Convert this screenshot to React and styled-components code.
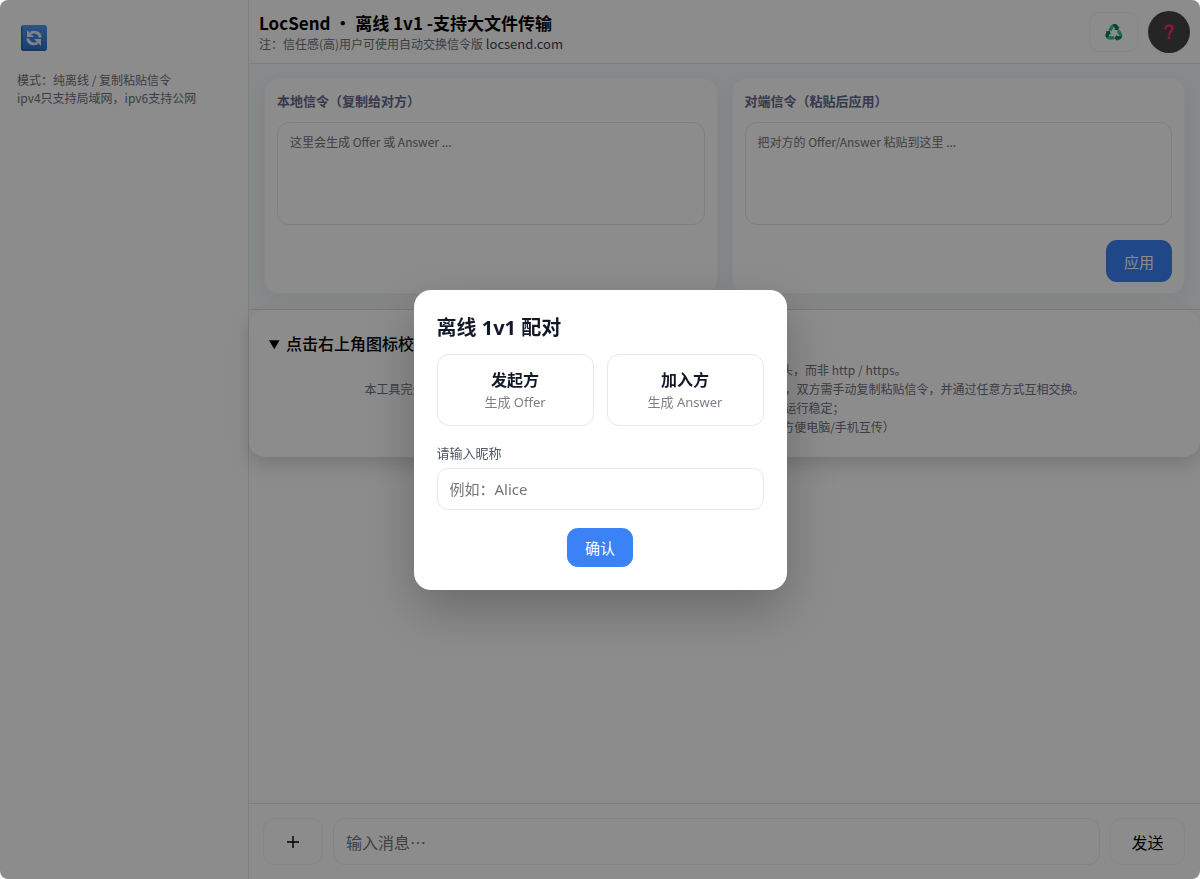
import {useState} from "react";
import styled, {createGlobalStyle} from "styled-components";


const App = () => {

    const [role, setRole] = useState("");
    const [nickname, setNickname] = useState("");
    const [open, setOpen] = useState(true);

    return (
        <Page>
            <GlobalStyle/>
            <Sidebar>
                <SwitchButton type="button" aria-label="切换模式">
                    <RefreshIcon/>
                </SwitchButton>
                <ModeText>
                    模式：纯离线 / 复制粘贴信令<br/>
                    ipv4只支持局域网，ipv6支持公网
                </ModeText>
            </Sidebar>
            <Main>
                <Header>
                    <div>
                        <Title>LocSend ・ 离线 1v1 -支持大文件传输</Title>
                        <Note>
                            注：信任感(高)用户可使用自动交换信令版 <NoteLink href="#">locsend.com</NoteLink>
                        </Note>
                    </div>
                    <HeaderActions>
                        <RecycleButton type="button" aria-label="重置">
                            <RecycleIcon/>
                        </RecycleButton>
                        <HelpButton type="button" aria-label="帮助">
                            <QuestionIcon/>
                        </HelpButton>
                    </HeaderActions>
                </Header>

                <SignalArea>
                    <Card>
                        <CardLabel htmlFor="local">本地信令（复制给对方）</CardLabel>
                        <SignalText id="local" readOnly placeholder="这里会生成 Offer 或 Answer ..."/>
                    </Card>
                    <Card>
                        <CardLabel htmlFor="remote">对端信令（粘贴后应用）</CardLabel>
                        <SignalText id="remote" placeholder="把对方的 Offer/Answer 粘贴到这里 ..."/>
                        <CardActions>
                            <PrimaryButton type="button" $height={42}>应用</PrimaryButton>
                        </CardActions>
                    </Card>
                </SignalArea>

                <Help open>
                    <HelpTitle>点击右上角图标校验文件</HelpTitle>
                    <HelpText>
                        <p>校验完成后请再次确认浏览器地址栏以 file 开头，而非 http / https。</p>
                        <p>本工具完全离线运行，不依赖任何第三方的服务器，也不会上传任何的聊天数据，双方需手动复制粘贴信令，并通过任意方式互相交换。</p>
                        <p>建议使用最新版桌面浏览器以保证运行稳定；</p>
                        <p>支持同一局域网内多种不同设备同时使用（方便电脑/手机互传）</p>
                    </HelpText>
                </Help>

                <Messages/>

                <Composer>
                    <PlusButton type="button" aria-label="添加文件">
                        <PlusIcon/>
                    </PlusButton>
                    <MessageInput aria-label="消息" placeholder="输入消息⋯"/>
                    <SendButton type="button">发送</SendButton>
                </Composer>
            </Main>

            {open && (
                <Overlay>
                    <Modal role="dialog" aria-labelledby="pair-title">
                        <ModalTitle id="pair-title">离线 1v1 配对</ModalTitle>
                        <RoleList>
                            {roles.map((res) => (
                                <RoleButton
                                    key={res.id}
                                    type="button"
                                    $active={role === res.id}
                                    onClick={() => setRole(res.id)}
                                >
                                    <RoleName>{res.name}</RoleName>
                                    <RoleHint>{res.hint}</RoleHint>
                                </RoleButton>
                            ))}
                        </RoleList>
                        <NameLabel htmlFor="nickname">请输入昵称</NameLabel>
                        <NameInput
                            id="nickname"
                            value={nickname}
                            placeholder="例如：Alice"
                            onChange={(e) => setNickname(e.target.value)}
                        />
                        <ModalActions>
                            <PrimaryButton type="button" $height={39} onClick={() => setOpen(false)}>确认</PrimaryButton>
                        </ModalActions>
                    </Modal>
                </Overlay>
            )}
        </Page>
    );
}

const roles = [
    {id: "offer", name: "发起方", hint: "生成 Offer"},
    {id: "answer", name: "加入方", hint: "生成 Answer"},
];

const RefreshIcon = () => (
    <svg width="26" height="26" viewBox="0 0 26 26" aria-hidden="true">
        <defs>
            <linearGradient id="tile" x1="0" y1="0" x2="0" y2="1">
                <stop offset="0" stopColor="#4c9bf0"/>
                <stop offset="1" stopColor="#2f6fd0"/>
            </linearGradient>
        </defs>
        <rect width="26" height="26" rx="3" fill="url(#tile)"/>
        <path d="M0 3v20a3 3 0 0 0 3 3h20a3 3 0 0 0 2.5-1.5H4A2.500 2.500 0 0 1 1.500 22V.500A3 3 0 0 0 0 3z" fill="#2a62bd"/>
        <g fill="none" stroke="#e8eefc" strokeWidth="2.800">
            <path d="M9.500 8.200c4-2.600 9.300-.3 9.800 4.300"/>
            <path d="M16.500 17.800c-4 2.600-9.300.3-9.800-4.300"/>
        </g>
        <path d="M6 5v7h7z" fill="#e8eefc"/>
        <path d="M20 21v-7h-7z" fill="#e8eefc"/>
    </svg>
);

const RecycleIcon = () => (
    <svg width="18" height="18" viewBox="0 0 18 18" aria-hidden="true">
        {[0, 120, 240].map((angle) => (
            <g key={angle} transform={`rotate(${angle} 9 10)`}>
                <path d="M3.300 6.800 5.900 2.500Q6.900 1 8.700 1L9.400 2.600 6.500 8.200z" fill="#2cc48c"/>
                <path d="M8.300 1h1.700q1.500 0 2.300 1.300l.9 1.500 1.200-.6-1.200 4.300-4.200-1.100 1.200-.7L8.600 3.400z" fill="#0f7a59"/>
            </g>
        ))}
    </svg>
);

const QuestionIcon = () => (
    <svg width="12" height="16" viewBox="0 0 12 16" aria-hidden="true">
        <path
            d="M2.300 4.600C2.300 2.700 3.800 1.500 6 1.500s3.700 1.200 3.700 3c0 2.700-3.500 2.800-3.500 6"
            fill="none"
            stroke="#f0315f"
            strokeWidth="2.400"
            strokeLinecap="round"
        />
        <circle cx="6" cy="13.800" r="1.500" fill="#f0315f"/>
    </svg>
);

const PlusIcon = () => (
    <svg width="14" height="14" viewBox="0 0 14 14" aria-hidden="true">
        <path d="M7 1v12M1 7h12" stroke="#000" strokeWidth="1.400"/>
    </svg>
);

const GlobalStyle = createGlobalStyle`
    * {
        box-sizing: border-box;
    }

    body {
        margin: 0;
        background: #fff;
        color: #000;
        font-family: "Noto Sans CJK SC", sans-serif;
    }

    button, input, textarea {
        font-family: inherit;
    }

    p, h1, h2 {
        margin: 0;
    }
`;

const Page = styled.div`
    display: flex;
    min-height: 100vh;
`;

const Sidebar = styled.aside`
    flex: none;
    width: 249px;
    padding: 25px 17px;
    border-right: 1px solid #e5e7eb;
`;

const SwitchButton = styled.button`
    display: flex;
    margin: 0 0 20px;
    padding: 0 4px;
    border: none;
    background: none;
    cursor: pointer;
`;

const ModeText = styled.p`
    color: #6b7280;
    font-size: 12px;
    line-height: 18px;
`;

const Main = styled.main`
    flex: 1;
    min-width: 0;
    display: flex;
    flex-direction: column;
`;

const Header = styled.header`
    display: flex;
    align-items: center;
    justify-content: space-between;
    height: 64px;
    padding: 0 10px;
    border-bottom: 1px solid #e5e7eb;
`;

const Title = styled.h1`
    font-size: 17px;
    font-weight: 700;
    line-height: 24px;
`;

const Note = styled.p`
    color: #6b7280;
    font-size: 12px;
    line-height: 18px;
`;

const NoteLink = styled.a`
    color: #374151;
    font-size: 13px;
    text-decoration: none;
`;

const HeaderActions = styled.div`
    display: flex;
    align-items: center;
    gap: 10px;
`;

const IconButton = styled.button`
    display: flex;
    align-items: center;
    justify-content: center;
    padding: 0;
    background: #fff;
    cursor: pointer;
`;

const RecycleButton = styled(IconButton)`
    width: 49px;
    height: 40px;
    border: 1px solid #f3f4f6;
    border-radius: 10px;
`;

const HelpButton = styled(IconButton)`
    width: 42px;
    height: 42px;
    border: none;
    border-radius: 50%;
    background: #444;
`;

const SignalArea = styled.section`
    display: grid;
    grid-template-columns: 1fr 1fr;
    gap: 14px;
    padding: 14px 15px 15px;
    border-bottom: 1px solid #dfe5ea;
    background: #f6fafc;
`;

const Card = styled.div`
    display: flex;
    flex-direction: column;
    min-height: 216px;
    padding: 12px 12px 11px;
    border: 1px solid #f5f7f9;
    border-radius: 14px;
    background: #fff;
    box-shadow: 0 6px 18px rgba(15, 23, 42, 0.06);
`;

const CardLabel = styled.label`
    margin-bottom: 11px;
    color: #64698b;
    font-size: 13px;
    font-weight: 700;
    line-height: 20px;
`;

const SignalText = styled.textarea`
    display: block;
    width: 100%;
    height: 103px;
    padding: 9px 12px;
    border: 1px solid #e5e7eb;
    border-radius: 12px;
    outline: none;
    resize: none;
    background: #fff;
    font-size: 12px;
    line-height: 20px;

    &::placeholder {
        color: #757575;
    }
`;

const CardActions = styled.div`
    display: flex;
    justify-content: flex-end;
    margin-top: 15px;
`;

const PrimaryButton = styled.button`
    width: 66px;
    height: ${(props) => props.$height}px;
    padding: 0;
    border: none;
    border-radius: 11px;
    background: #3b82f6;
    color: #fff;
    font-size: 15px;
    cursor: pointer;
`;

const Help = styled.details`
    padding: 21px 20px;
    border-radius: 16px;
    background: #fff;
    box-shadow: 0 8px 20px rgba(0, 0, 0, 0.16);
`;

const HelpTitle = styled.summary`
    font-size: 16px;
    font-weight: 500;
    line-height: 24px;
    cursor: pointer;
`;

const HelpText = styled.div`
    padding-top: 5px;
    color: #6b7280;
    font-size: 12px;
    line-height: 19px;
    text-align: center;
`;

const Messages = styled.div`
    flex: 1;
`;

const Composer = styled.form`
    display: flex;
    gap: 10px;
    padding: 14px 15px 14px 14px;
    border-top: 1px solid #e5e7eb;
`;

const PlusButton = styled(IconButton)`
    width: 60px;
    height: 47px;
    border: 1px solid #f3f4f6;
    border-radius: 12px;
`;

const MessageInput = styled.input`
    flex: 1;
    min-width: 0;
    height: 47px;
    padding: 0 12px;
    border: 1px solid #f0f1f3;
    border-radius: 12px;
    outline: none;
    font-size: 16px;

    &::placeholder {
        color: #757575;
    }
`;

const SendButton = styled.button`
    width: 75px;
    height: 47px;
    padding: 0;
    border: 1px solid #f3f4f6;
    border-radius: 12px;
    background: #fff;
    color: #000;
    font-size: 16px;
    cursor: pointer;
`;

const Overlay = styled.div`
    position: fixed;
    inset: 0;
    display: flex;
    align-items: center;
    justify-content: center;
    border-radius: 8px;
    background: rgba(0, 0, 0, 0.45);
`;

const Modal = styled.div`
    width: 373px;
    max-width: 92vw;
    padding: 23px;
    border-radius: 17px;
    background: #fff;
    box-shadow: 0 20px 52px rgba(0, 0, 0, 0.25);
    font-family: "Noto Sans", "Noto Sans CJK SC", sans-serif;
`;

const ModalTitle = styled.h2`
    margin-bottom: 11px;
    color: #111827;
    font-size: 20px;
    font-weight: 700;
    line-height: 30px;
`;

const RoleList = styled.div`
    display: grid;
    grid-template-columns: 1fr 1fr;
    gap: 13px;
    margin-bottom: 17px;
`;

const RoleButton = styled.button`
    display: flex;
    flex-direction: column;
    align-items: center;
    justify-content: center;
    height: 72px;
    padding: 0;
    border: 1px solid ${(props) => props.$active ? "#3b82f6" : "#e5e7eb"};
    border-radius: 12px;
    background: #fff;
    cursor: pointer;
`;

const RoleName = styled.span`
    color: #111827;
    font-size: 16px;
    font-weight: 700;
    line-height: 24px;
`;

const RoleHint = styled.span`
    color: #7b7f86;
    font-size: 13px;
    line-height: 20px;
`;

const NameLabel = styled.label`
    display: block;
    margin-bottom: 5px;
    color: #4b5563;
    font-size: 13px;
    line-height: 20px;
`;

const NameInput = styled.input`
    display: block;
    width: 100%;
    height: 42px;
    padding: 0 12px;
    border: 1px solid #e5e7eb;
    border-radius: 11px;
    outline: none;
    font-size: 15px;

    &::placeholder {
        color: #757575;
    }
`;

const ModalActions = styled.div`
    display: flex;
    justify-content: center;
    margin-top: 18px;
`;


export default App;
